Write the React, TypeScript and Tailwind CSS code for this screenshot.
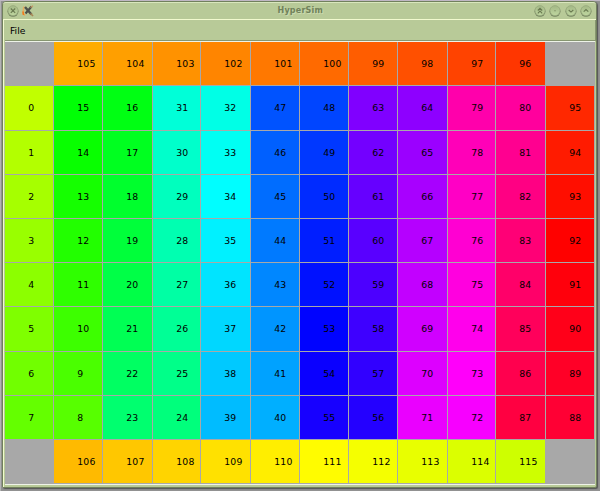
import React from "react";

type Cell = number | null;

// Left column, four serpentine column pairs and the right column.
const body: Cell[][] = Array.from({ length: 8 }, (_, r) => [
  r,
  15 - r,
  16 + r,
  31 - r,
  32 + r,
  47 - r,
  48 + r,
  63 - r,
  64 + r,
  79 - r,
  80 + r,
  95 - r,
]);
const top: Cell[] = [null, 105, 104, 103, 102, 101, 100, 99, 98, 97, 96, null];
const bottom: Cell[] = [null, 106, 107, 108, 109, 110, 111, 112, 113, 114, 115, null];
const rows = [top, ...body, bottom];

const hue = (n: number) => `hsl(${(74.7 + (n * 360) / 116) % 360} 100% 50%)`;

function Orb({ children }: { children?: React.ReactNode }) {
  return (
    <svg width="12" height="12" viewBox="0 0 12 12" fill="none">
      <defs>
        <linearGradient id="orb" x1="0" y1="0" x2="0" y2="1">
          <stop offset="0" stopColor="#a3b785" />
          <stop offset="1" stopColor="#bfd7a0" />
        </linearGradient>
      </defs>
      <circle cx="6" cy="6.3" r="5.5" fill="#74845f" />
      <circle cx="6" cy="5.6" r="5" fill="url(#orb)" stroke="#9bae80" strokeWidth=".7" />
      <g stroke="#68794f" strokeWidth="1.1">{children}</g>
    </svg>
  );
}

function AppIcon() {
  return (
    <svg width="12" height="12" viewBox="0 0 12 12" fill="none">
      <path d="M1.8 1.5L1 8.5L3 10.5" stroke="#e5ac62" strokeWidth="1.6" />
      <path d="M1 6.5L1.5 10" stroke="#ee7c1c" strokeWidth="1.6" />
      <path d="M3 2L9.5 9.5" stroke="#50534c" strokeWidth="2.4" />
      <path d="M9.5 1.5L3.5 8.5" stroke="#4d504a" strokeWidth="2.2" />
      <path d="M8.5 2.5L11 .7" stroke="#c49662" strokeWidth="1.3" />
      <path d="M8.5 8.5L11 11" stroke="#a88755" strokeWidth="1.7" />
    </svg>
  );
}

export default function App() {
  return (
    <div className="h-[491px] w-[600px] overflow-hidden bg-[#919191] pt-px pl-[2px] font-['DejaVu_Sans',sans-serif] text-black shadow-[inset_0_1px_0_#c0b8c4,inset_1px_0_0_#b3b3b3]">
      <div className="flex h-[487px] w-[595px] flex-col rounded-t-[4px] rounded-b-[2px] border border-[#71805d] bg-[#b8ca98] shadow-[1px_1px_1px_#555]">
        <header className="flex h-[17px] shrink-0 items-center rounded-t-[3px] border-t border-[#d9e7bd] pr-[4px] pl-[4px]">
          <Orb>
            <path d="M3.8 3.5l4.4 4.4M8.2 3.5l-4.4 4.4" />
          </Orb>
          <div className="ml-[3px]">
            <AppIcon />
          </div>
          <h1 className="flex-1 pl-[33px] text-center text-[8px] leading-[16px] font-bold tracking-[0.2px] text-[#71825a] [text-shadow:1px_1px_0_#cadbae]">
            HyperSim
          </h1>
          <div className="flex gap-[3.5px]">
            <Orb><path d="M3.8 5.5L6 3.3L8.2 5.5M3.8 8.3L6 6.1L8.2 8.3" /></Orb>
            <Orb><path d="M5.5 5.8h1" /></Orb>
            <Orb><path d="M3.7 5L6 7.1L8.3 5" /></Orb>
            <Orb><path d="M3.7 6.7L6 4.5L8.3 6.7" /></Orb>
          </div>
        </header>
        <div className="flex flex-1 flex-col border-t border-l border-[#f2facf] pl-px">
          <nav className="flex h-[21px] shrink-0 items-center border-r border-b border-[#879670] pt-[2px] pl-[5px] text-[9.2px]">
            File
          </nav>
          <main className="mt-px mr-px border-r border-b border-[#eef3e8] bg-[#a8a8a8] shadow-[0_-1px_0_#eef3e8]">
            <div className="grid grid-cols-[49px_49px_50px_48px_50px_49px_49px_49px_50px_48px_50px_49px] grid-rows-[44px_45px_44px_44px_44px_44px_45px_44px_44px_44px]">
              {rows.flatMap((row, r) =>
                row.map((n, c) => (
                  <div
                    key={`${r}-${c}`}
                    className="flex items-center border-r border-b border-[#a8a8a8] pl-[23.3px] text-[9.3px] leading-none tracking-[0.15px]"
                    style={{ backgroundColor: n === null ? "#a8a8a8" : hue(n) }}
                  >
                    {n}
                  </div>
                )),
              )}
            </div>
          </main>
        </div>
      </div>
    </div>
  );
}
